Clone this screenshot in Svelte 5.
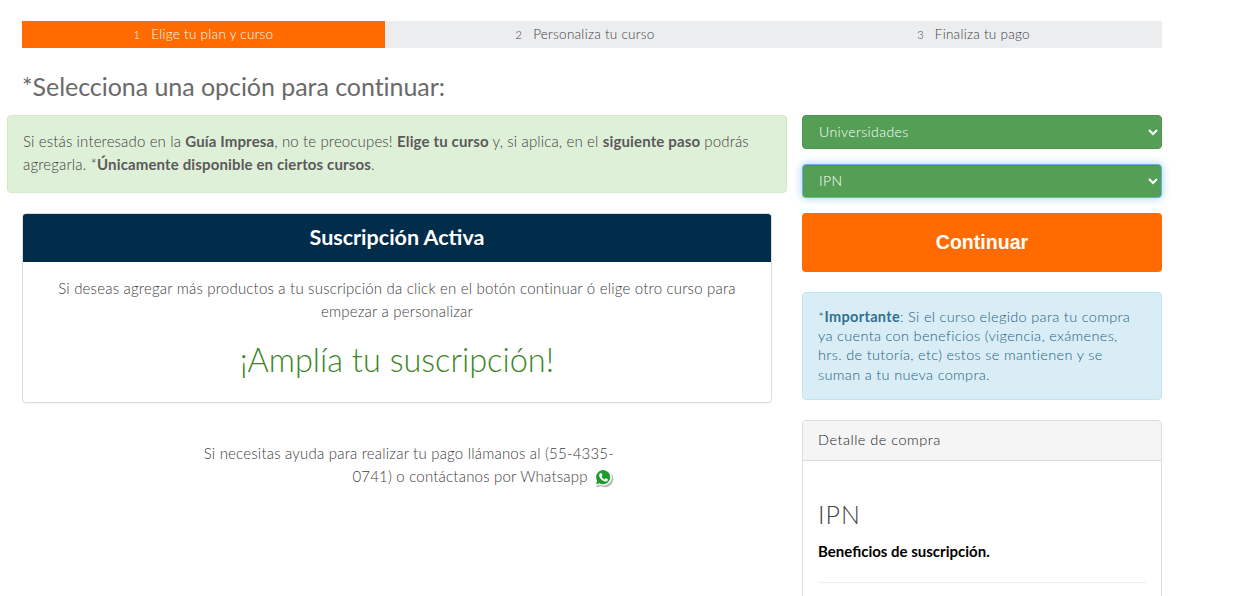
<script>
	const steps = [
		{ n: 1, label: "Elige tu plan y curso", active: true },
		{ n: 2, label: "Personaliza tu curso" },
		{ n: 3, label: "Finaliza tu pago" }
	];
</script>

<div class="page">
	<ol class="steps">
		{#each steps as step (step.n)}
			<li class:active={step.active}><span class="num">{step.n}</span>{step.label}</li>
		{/each}
	</ol>

	<h2 class="title">*Selecciona una opción para continuar:</h2>

	<div class="columns">
		<div class="left">
			<div class="alert-green">
				Si estás interesado en la <b>Guía Impresa</b>, no te preocupes! <b>Elige tu curso</b> y, si aplica, en el <b>siguiente paso</b> podrás agregarla. *<b>Únicamente disponible en ciertos cursos</b>.
			</div>

			<div class="card">
				<div class="card-head">Suscripción Activa</div>
				<div class="card-body">
					<p>Si deseas agregar más productos a tu suscripción da click en el botón continuar ó elige otro curso para empezar a personalizar</p>
					<h3>¡Amplía tu suscripción!</h3>
				</div>
			</div>

			<p class="help">
				Si necesitas ayuda para realizar tu pago llámanos al (55-4335-0741) o contáctanos por Whatsapp
				<svg class="wa" viewBox="0 0 20 20" width="21" height="21" aria-hidden="true">
					<path d="M2 18.6l1.3-4.4a8 8 0 1 1 3.1 3.1z" fill="#b9bdb8" transform="translate(1 1)" />
					<path d="M1.5 18l1.3-4.6a8 8 0 1 1 3.2 3.2z" fill="#fff" />
					<path d="M3 16.4l.95-3.2a6.7 6.7 0 1 1 2.4 2.3z" fill="#1f9a2c" />
					<path d="M7.4 5.6c-.4 0-1.5.8-1.5 2.2 0 2.9 3.4 6 6.2 6 1.3 0 2.2-1 2.2-1.6 0-.4-1.8-1.5-2.2-1.4-.4.1-.7 1-1.1 1-.9 0-2.8-1.9-2.8-2.8 0-.4.8-.7.9-1.1.1-.4-1-2.3-1.7-2.3z" fill="#fff" />
				</svg>
			</p>
		</div>

		<div class="right">
			<select class="pick">
				<option>Universidades</option>
			</select>
			<select class="pick focused">
				<option>IPN</option>
			</select>
			<button class="go" type="button">Continuar</button>

			<div class="alert-blue">
				*<b>Importante</b>: Si el curso elegido para tu compra ya cuenta con beneficios (vigencia, exámenes, hrs. de tutoría, etc) estos se mantienen y se suman a tu nueva compra.
			</div>

			<div class="detail">
				<div class="detail-head">Detalle de compra</div>
				<div class="detail-body">
					<h3>IPN</h3>
					<strong>Beneficios de suscripción.</strong>
					<hr />
				</div>
			</div>
		</div>
	</div>
</div>

<style>
	:global(body) {
		overflow: hidden;
		background: #fff;
	}
	.page {
		box-sizing: border-box;
		width: 1140px;
		margin-left: 22px;
		padding-top: 21px;
		height: 596px;
		font-family: Lato, "Open Sans", sans-serif;
		font-weight: 300;
		font-size: 15px;
		line-height: 23px;
		color: #404040;
	}
	.steps {
		display: grid;
		grid-template-columns: 363px 400px 1fr;
		list-style: none;
		margin: 0;
		padding: 0;
		height: 27px;
		background: #ecedef;
	}
	.steps li {
		text-align: center;
		font-size: 13.5px;
		line-height: 27px;
		color: #404040;
		letter-spacing: 0.27px;
	}
	.steps li.active {
		background: #ff6b00;
		color: #fff;
	}
	.num {
		font-size: 11px;
		margin-right: 11px;
	}
	.title {
		margin: 22px 0 0;
		font-size: 25px;
		line-height: 32px;
		font-weight: 400;
		color: #6a6a6a;
		letter-spacing: -0.05px;
	}
	.columns {
		display: grid;
		grid-template-columns: 750px 360px;
		column-gap: 30px;
		margin-top: 13px;
	}
	.alert-green {
		box-sizing: border-box;
		height: 78px;
		margin: 0 -15px;
		padding: 14px 15px;
		background: #dff0d8;
		border: 1px solid #d6e9c6;
		border-radius: 4px;
		letter-spacing: 0.14px;
	}
	.alert-green b {
		font-weight: 700;
		color: #5a5a5a;
	}
	.card {
		margin-top: 20px;
		height: 190px;
		box-sizing: border-box;
		border: 1px solid #ddd;
		border-radius: 4px;
		box-shadow: 0 1px 1px rgba(0, 0, 0, 0.05);
		overflow: hidden;
	}
	.card-head {
		height: 48px;
		background: #022d4a;
		color: #fff;
		font-size: 21.5px;
		font-weight: 700;
		line-height: 47px;
		text-align: center;
	}
	.card-body {
		padding: 15px 30px 0;
		text-align: center;
	}
	.card-body p {
		margin: 0;
		letter-spacing: 0.2px;
	}
	.card-body h3 {
		margin: 20px 0 0;
		font-size: 32.5px;
		line-height: 33px;
		font-weight: 300;
		color: #3c8527;
	}
	.help {
		width: 414px;
		margin: 39px 0 0 178px;
		text-align: right;
		letter-spacing: 0.2px;
	}
	.wa {
		vertical-align: -6px;
		margin-left: 1px;
	}
	.right {
		display: flex;
		flex-direction: column;
		min-width: 0;
	}
	.pick {
		box-sizing: border-box;
		width: 100%;
		height: 34px;
		padding: 4px 12px 6px;
		background: #559e55;
		color: #fff;
		border: 1px solid #4f974f;
		border-radius: 4px;
		font-family: inherit;
		font-size: 14px;
		font-weight: 300;
		letter-spacing: 0.4px;
	}
	.pick.focused {
		margin-top: 15px;
		border-color: #66afe9;
		outline: 0;
		box-shadow: inset 0 1px 1px rgba(0, 0, 0, 0.075), 0 0 8px rgba(102, 175, 233, 0.6);
	}
	.go {
		margin-top: 15px;
		height: 59px;
		border: 0;
		border-radius: 4px;
		background: #ff6b00;
		color: #fff;
		font-family: "Liberation Sans", Arial, sans-serif;
		font-size: 19.6px;
		font-weight: 700;
	}
	.alert-blue {
		box-sizing: border-box;
		height: 108px;
		margin-top: 20px;
		padding: 14px 20px 15px 15px;
		background: #d9edf7;
		border: 1px solid #bce8f1;
		border-radius: 4px;
		font-size: 14.5px;
		line-height: 19.2px;
		color: #1f5f80;
		letter-spacing: 0.33px;
	}
	.alert-blue b {
		font-weight: 700;
		color: #31708f;
	}
	.detail {
		margin-top: 20px;
		border: 1px solid #ddd;
		border-radius: 4px;
		height: 300px;
		box-sizing: border-box;
	}
	.detail-head {
		height: 39px;
		background: #f5f5f5;
		border-bottom: 1px solid #ddd;
		border-radius: 3px 3px 0 0;
		padding: 0 15px;
		line-height: 38px;
		font-size: 14.5px;
		color: #222;
		letter-spacing: 0.5px;
	}
	.detail-body {
		padding: 0 15px;
	}
	.detail-body h3 {
		margin: 38px 0 0;
		font-size: 25px;
		line-height: 30px;
		font-weight: 300;
		color: #444;
		letter-spacing: 1px;
	}
	.detail-body strong {
		display: block;
		margin-top: 11px;
		font-weight: 700;
		font-size: 15px;
		color: #000;
	}
	.detail-body hr {
		margin: 19px 0 0;
		border: 0;
		border-top: 1px solid #eee;
	}
</style>
